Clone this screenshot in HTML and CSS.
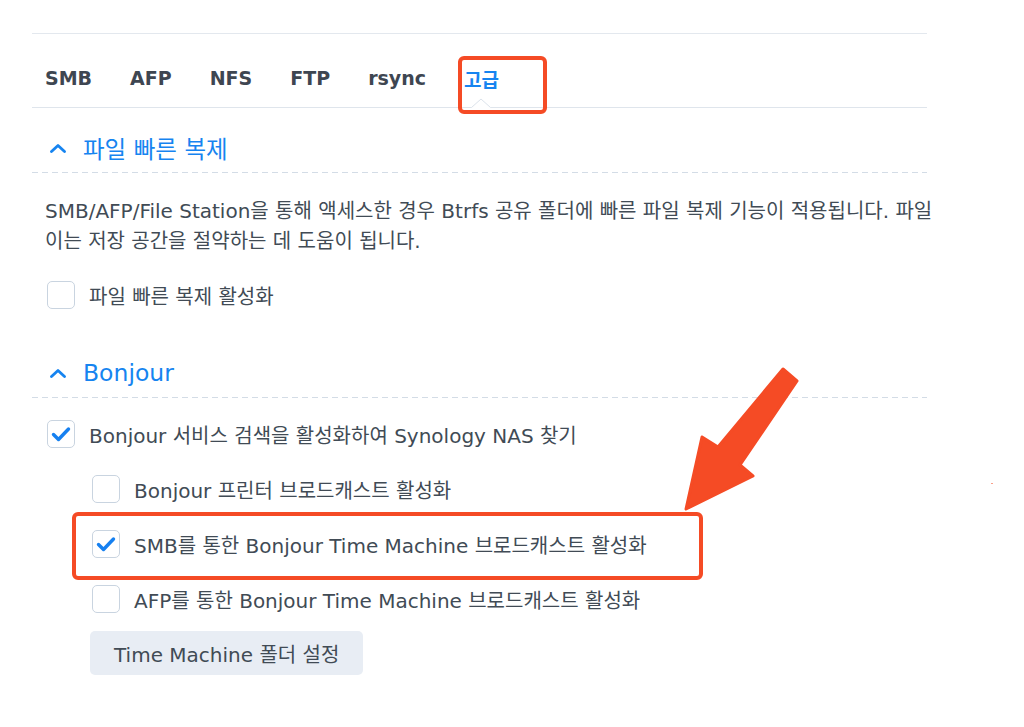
FILE: index.html
```html
<!DOCTYPE html>
<html lang="ko">

<head>
  <meta charset="UTF-8">
  <meta name="viewport" content="width=device-width, initial-scale=1.0">
  <title>파일 서비스 - 고급</title>
  <link rel="stylesheet" href="styles.css">
</head>

<body>
  <div class="panel">
    <nav class="tabs">
      <span class="tab">SMB</span>
      <span class="tab">AFP</span>
      <span class="tab">NFS</span>
      <span class="tab">FTP</span>
      <span class="tab">rsync</span>
      <span class="tab active">고급
        <svg class="notch" width="20" height="10" viewBox="0 0 20 10">
          <polygon points="0,10 10,1 20,10" fill="#fff" />
          <polyline points="0.5,9.5 10,1 19.5,9.5" fill="none" stroke="#dbe2ea" stroke-width="1" />
        </svg>
      </span>
    </nav>

    <section class="group">
      <div class="group-head">
        <svg class="chevron" width="16" height="9" viewBox="0 0 16 9">
          <polyline points="1.5,7.5 8,1.5 14.5,7.5" fill="none" stroke="currentColor" stroke-width="2.8" stroke-linecap="round" stroke-linejoin="round" />
        </svg>
        <span>파일 빠른 복제</span>
      </div>
      <div class="dash-rule"></div>
      <div class="group-body clone-body">
        <p class="desc">SMB/AFP/File Station을 통해 액세스한 경우 Btrfs 공유 폴더에 빠른 파일 복제 기능이 적용됩니다. 파일<br>이는 저장 공간을 절약하는 데 도움이 됩니다.</p>
        <label class="check">
          <span class="box"></span>
          <span>파일 빠른 복제 활성화</span>
        </label>
      </div>
    </section>

    <section class="group">
      <div class="group-head">
        <svg class="chevron" width="16" height="9" viewBox="0 0 16 9">
          <polyline points="1.5,7.5 8,1.5 14.5,7.5" fill="none" stroke="currentColor" stroke-width="2.8" stroke-linecap="round" stroke-linejoin="round" />
        </svg>
        <span>Bonjour</span>
      </div>
      <div class="dash-rule"></div>
      <div class="group-body bonjour-body">
        <label class="check">
          <span class="box checked">
            <svg width="28" height="28" viewBox="0 0 28 28">
              <polyline points="6.5,14.5 11.5,19.5 21.5,9" fill="none" stroke="currentColor" stroke-width="3.4" stroke-linecap="round" stroke-linejoin="round" />
            </svg>
          </span>
          <span>Bonjour 서비스 검색을 활성화하여 Synology NAS 찾기</span>
        </label>
        <label class="check sub">
          <span class="box"></span>
          <span>Bonjour 프린터 브로드캐스트 활성화</span>
        </label>
        <label class="check sub">
          <span class="box checked">
            <svg width="28" height="28" viewBox="0 0 28 28">
              <polyline points="6.5,14.5 11.5,19.5 21.5,9" fill="none" stroke="currentColor" stroke-width="3.4" stroke-linecap="round" stroke-linejoin="round" />
            </svg>
          </span>
          <span>SMB를 통한 Bonjour Time Machine 브로드캐스트 활성화</span>
        </label>
        <label class="check sub">
          <span class="box"></span>
          <span>AFP를 통한 Bonjour Time Machine 브로드캐스트 활성화</span>
        </label>
        <button class="btn">Time Machine 폴더 설정</button>
      </div>
    </section>
  </div>

  <!-- annotations drawn over the screenshot -->
  <div class="mark mark-tab"></div>
  <div class="mark mark-row"></div>
  <svg class="arrow" width="350" height="180" viewBox="0 0 350 180">
    <polygon points="123,19 137,31 80,115 93,126 26,159 42,87 58,97" fill="#f54b25" stroke="#f54b25" stroke-width="3" stroke-linejoin="round" />
    <rect x="331" y="133" width="2" height="1" fill="#f9a08a" />
  </svg>
</body>

</html>
```

FILE: styles.css
```css
* {
  margin: 0;
  padding: 0;
  box-sizing: border-box;
}

body {
  font-family: "DejaVu Sans", "Noto Sans CJK KR", sans-serif;
  font-size: 20px;
  color: #414b55;
  background-color: #fff;
}

.panel {
  margin-left: 32px;
  width: 902px;
  padding-top: 33px;
  overflow: hidden;
}

/* tab bar */

.tabs {
  width: 895px;
  height: 75px;
  display: flex;
  gap: 38px;
  padding: 15px 0 0 13px;
  border-top: 1px solid #e3e8ee;
  border-bottom: 1px solid #dfe5ec;
}

.tab {
  position: relative;
  display: flex;
  align-items: center;
  font-size: 19px;
  font-weight: bold;
  color: #3e4651;
}

.tab.active {
  color: #1684f0;
}

.notch {
  position: absolute;
  left: 50%;
  bottom: -1px;
  margin-left: -10px;
}

/* collapsible groups */

.group-head {
  display: flex;
  align-items: center;
  gap: 17px;
  height: 40px;
  margin-top: 20px;
  margin-bottom: 4px;
  padding-left: 18px;
  font-size: 23.5px;
  color: #1684f0;
}

.group + .group .group-head {
  margin-top: 44px;
}

.dash-rule {
  width: 895px;
  height: 1px;
  background-image: linear-gradient(to right, #d3dce6 6px, transparent 6px);
  background-size: 10px 1px;
}

.group-body {
  display: flex;
  flex-direction: column;
  align-items: flex-start;
  padding-left: 15px;
}

.clone-body {
  margin-top: 23px;
  gap: 25px;
}

.bonjour-body {
  margin-top: 22px;
  gap: 27px;
}

.desc {
  margin-left: -2px;
  line-height: 30px;
  white-space: nowrap;
}

.check {
  display: flex;
  align-items: center;
  gap: 14px;
  height: 28px;
  cursor: pointer;
  user-select: none;
}

.check.sub {
  margin-left: 45px;
}

.box {
  width: 28px;
  height: 28px;
  flex-shrink: 0;
  border: 1px solid #c9d4e0;
  border-radius: 5px;
  background-color: #fff;
  color: #1680f0;
}

.box svg {
  display: block;
  margin: -1px;
}

.btn {
  margin-top: -9px;
  margin-left: 43px;
  height: 44px;
  padding: 0 24px;
  border: none;
  border-radius: 5px;
  background-color: #e8edf4;
  color: #414b55;
  font-family: inherit;
  font-size: 20px;
  cursor: pointer;
}

/* annotations */

.mark {
  position: absolute;
  border: 4px solid #f54b25;
  border-radius: 6px;
  pointer-events: none;
}

.mark-tab {
  left: 458px;
  top: 56px;
  width: 89px;
  height: 58px;
}

.mark-row {
  left: 72px;
  top: 512px;
  width: 631px;
  height: 68px;
}

.arrow {
  position: absolute;
  left: 660px;
  top: 350px;
  pointer-events: none;
}
```
